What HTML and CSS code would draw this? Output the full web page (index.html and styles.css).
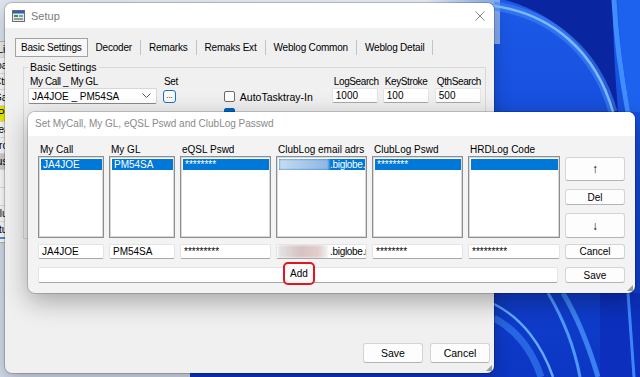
FILE: index.html
```html
<!DOCTYPE html>
<html lang="en">
<head>
  <meta charset="UTF-8">
  <meta name="viewport" content="width=device-width, initial-scale=1.0">
  <title>Setup</title>
  <link rel="stylesheet" href="styles.css">
</head>
<body>
  <div class="desktop">
    <!-- wallpaper -->
    <svg class="wallpaper" width="640" height="377" viewBox="0 0 640 377">
      <defs>
        <linearGradient id="sky" x1="0" y1="0" x2="1" y2="0">
          <stop offset="0" stop-color="#dfe6f1"/>
          <stop offset="0.85" stop-color="#e9eef6"/>
          <stop offset="1" stop-color="#7fa8ee"/>
        </linearGradient>
        <linearGradient id="deep" x1="0" y1="0" x2="0" y2="1">
          <stop offset="0" stop-color="#1c5ae8"/>
          <stop offset="1" stop-color="#0c36c4"/>
        </linearGradient>
      </defs>
      <rect x="0" y="0" width="640" height="377" fill="url(#deep)"/>
      <rect x="0" y="0" width="500" height="44" fill="url(#sky)"/>
      <rect x="0" y="238" width="190" height="139" fill="#d3dceb"/>
      <path d="M505 0 C560 15 598 55 613 112 L618 112 C615 70 612 30 614 0 Z" fill="#0a25a0"/>
      <path d="M494 6 C552 14 596 52 613 112" stroke="#3f86f6" stroke-width="9" fill="none" opacity="0.6"/>
      <path d="M494 6 C552 14 596 52 613 112" stroke="#7dbaff" stroke-width="2.5" fill="none"/>
      <path d="M614 0 C616 40 622 80 628 112" stroke="#3f8eff" stroke-width="5" fill="none"/>
      <path d="M618 0 L640 0 L640 112 L630 112 C625 80 619 40 618 0 Z" fill="#1d62ee"/>
      <rect x="600" y="293" width="40" height="84" fill="#0c30bd"/>
      <path d="M494 318 C516 330 532 350 541 377" stroke="#3b84f5" stroke-width="7" fill="none" opacity="0.6"/>
      <path d="M494 304 C522 318 542 345 553 377" stroke="#62a8ff" stroke-width="2.5" fill="none"/>
      <path d="M548 293 C564 320 575 350 580 377" stroke="#4f98ff" stroke-width="3" fill="none"/>
      <path d="M563 293 C579 320 590 350 598 377" stroke="#3a80f0" stroke-width="5" fill="none"/>
      <path d="M628 293 C630 320 632 350 634 377" stroke="#3b86ff" stroke-width="3" fill="none"/>
    </svg>

    <!-- window behind the setup dialog -->
    <div class="backwin">
      <div class="bw-row bw-gray">List</div>
      <div class="bw-row">Load</div>
      <div class="bw-row">Ctrl-</div>
      <div class="bw-row">Gap</div>
      <div class="bw-row bw-yellow">WPM</div>
      <div class="bw-row">Clear</div>
      <div class="bw-row">Search</div>
      <div class="bw-row bw-dark">Push</div>
      <div class="bw-row bw-blank"></div>
      <div class="bw-row bw-blank"></div>
      <div class="bw-row">Plug</div>
      <div class="bw-row bw-line">Setup</div>
    </div>

    <div class="setup">
      <div class="titlebar">
        <svg class="app-icon" width="13" height="12" viewBox="0 0 13 12">
          <rect x="0.5" y="0.5" width="12" height="11" fill="#e8e8e8" stroke="#6d6d6d"/>
          <rect x="1" y="1" width="11" height="2.5" fill="#2f5fb8"/>
          <rect x="2" y="5" width="4" height="2" fill="#3a9a3a"/>
          <rect x="7" y="5" width="4" height="2" fill="#3fb5e8"/>
          <rect x="2" y="8" width="9" height="2" fill="#9a9a9a"/>
        </svg>
        <span class="title-text">Setup</span>
        <svg class="close-x" width="10" height="10" viewBox="0 0 10 10">
          <path d="M0.5 0.5 L9.5 9.5 M9.5 0.5 L0.5 9.5" stroke="#8a8a8a" stroke-width="1"/>
        </svg>
      </div>

      <div class="setup-body">
        <div class="tabs">
          <div class="tab tab--active">Basic Settings</div>
          <div class="tab">Decoder</div>
          <div class="tab">Remarks</div>
          <div class="tab">Remaks Ext</div>
          <div class="tab">Weblog Common</div>
          <div class="tab">Weblog Detail</div>
        </div>

        <fieldset class="groupbox">
          <legend>Basic Settings</legend>
          <div class="gb-row">
            <div class="gb-col gb-col--call">
              <div class="gb-label">My Call _ My GL</div>
              <div class="combo">
                <span>JA4JOE _ PM54SA</span>
                <svg width="9" height="6" viewBox="0 0 9 6"><path d="M0.5 0.5 L4.5 4.5 L8.5 0.5" stroke="#555" fill="none"/></svg>
              </div>
            </div>
            <div class="gb-col gb-col--set">
              <div class="gb-label">Set</div>
              <div class="dots-btn">...</div>
            </div>
            <div class="gb-col gb-col--checks">
              <label class="check"><span class="check-box"></span>AutoTasktray-In</label>
              <label class="check"><span class="check-box check-box--on"></span></label>
            </div>
            <div class="gb-col gb-col--num">
              <div class="gb-label">LogSearch</div>
              <div class="field">1000</div>
            </div>
            <div class="gb-col gb-col--num gb-col--key">
              <div class="gb-label">KeyStroke</div>
              <div class="field">100</div>
            </div>
            <div class="gb-col gb-col--num gb-col--qth">
              <div class="gb-label">QthSearch</div>
              <div class="field">500</div>
            </div>
          </div>
        </fieldset>

        <div class="setup-footer">
          <div class="btn btn--footer">Save</div>
          <div class="btn btn--footer">Cancel</div>
        </div>
      </div>
      <div class="grip grip--setup"></div>
    </div>

    <div class="dialog">
      <div class="dialog-title">Set MyCall, My GL, eQSL Pswd and ClubLog Passwd</div>
      <div class="dialog-body">
        <div class="col-label">My Call</div>
        <div class="col-label">My GL</div>
        <div class="col-label">eQSL Pswd</div>
        <div class="col-label">ClubLog email adrs</div>
        <div class="col-label">ClubLog Pswd</div>
        <div class="col-label">HRDLog Code</div>
        <div></div>

        <div class="listbox"><div class="list-sel">JA4JOE</div></div>
        <div class="listbox"><div class="list-sel">PM54SA</div></div>
        <div class="listbox"><div class="list-sel">********</div></div>
        <div class="listbox"><div class="list-sel list-sel--mail"><span class="mail-hidden mail-hidden--sel"></span>.biglobe.ne</div></div>
        <div class="listbox"><div class="list-sel">********</div></div>
        <div class="listbox"><div class="list-sel"></div></div>
        <div class="side-btns">
          <div class="btn btn--tall">&#8593;</div>
          <div class="btn">Del</div>
          <div class="btn btn--tall btn--down">&#8595;</div>
        </div>

        <div class="field field--row">JA4JOE</div>
        <div class="field field--row">PM54SA</div>
        <div class="field field--row">*********</div>
        <div class="field field--row field--mail"><span class="mail-hidden"></span>.biglobe.ne</div>
        <div class="field field--row">********</div>
        <div class="field field--row">*********</div>
        <div class="btn btn--row">Cancel</div>

        <div class="wide-row">
          <div class="field field--wide"></div>
          <div class="add-btn">Add</div>
        </div>
        <div class="btn btn--row btn--save">Save</div>
      </div>
      <div class="grip grip--dialog"></div>
    </div>
  </div>
</body>
</html>
```

FILE: styles.css
```css
/* Desktop */
body {
  margin: 0;
  font-family: "Liberation Sans", Arial, sans-serif;
  font-size: 10px;
  color: #000;
}

.desktop {
  position: relative;
  width: 640px;
  height: 377px;
  overflow: hidden;
}

.wallpaper {
  position: absolute;
  left: 0;
  top: 0;
}

/* Log window peeking out on the left */
.backwin {
  position: absolute;
  left: -54px;
  top: 41px;
  width: 66px;
  height: 200px;
  background: #fff;
  border: 1px solid #b8b8b8;
}

.bw-row {
  height: 15px;
  line-height: 15px;
  text-align: right;
  font-size: 10px;
  border-bottom: 1px solid #e2e2e2;
}

.bw-gray { background: #eeeeee; }
.bw-yellow { background: #f4f400; }
.bw-dark { background: #d4d4d4; }
.bw-blank { height: 17px; }
.bw-line { border-bottom: 2px solid #5b8fd6; }

/* Setup window */
.setup {
  position: absolute;
  left: 5px;
  top: 3px;
  width: 489px;
  height: 370px;
  background: #f0f0f0;
  border-radius: 7px;
  box-shadow: 0 0 0 1px rgba(0,0,0,.18), 0 6px 18px rgba(0,0,0,.25);
  display: flex;
  flex-direction: column;
  overflow: hidden;
}

.titlebar {
  height: 25px;
  flex: 0 0 25px;
  background: #fff;
  display: flex;
  align-items: center;
  padding: 0 7px;
}

.title-text {
  margin-left: 6px;
  color: #7a7a7a;
  font-size: 11px;
}

.close-x {
  margin-left: auto;
  margin-right: 2px;
}

.setup-body {
  flex: 1;
  display: flex;
  flex-direction: column;
  padding: 10px 4px 10px 10px;
}

.tabs {
  display: flex;
  align-items: center;
  height: 18px;
}

.tab {
  height: 15px;
  line-height: 15px;
  padding: 0 8px;
  border-right: 1px solid #c4c4c4;
  letter-spacing: -0.2px;
}

.tab--active {
  height: 17px;
  line-height: 17px;
  padding: 0 5px;
  border: 1px solid #a2a2a2;
  background: #f7f7f7;
}

.groupbox {
  margin: 5px 0 0 8px;
  width: 462px;
  height: 178px;
  box-sizing: border-box;
  border: 1px solid #d8d8d8;
  padding: 0 4px;
}

.groupbox legend {
  padding: 0 2px;
  font-size: 10.5px;
  line-height: 12px;
}

.gb-row {
  display: flex;
  margin-top: 3px;
}

.gb-label {
  height: 12px;
  line-height: 12px;
  padding-left: 2px;
  white-space: nowrap;
  letter-spacing: -0.4px;
}

.gb-col--call { width: 129px; }

.combo {
  height: 16px;
  box-sizing: border-box;
  background: #fff;
  border: 1px solid #d6d6d6;
  border-bottom-color: #8a8a8a;
  border-radius: 2px;
  display: flex;
  align-items: center;
  justify-content: space-between;
  padding: 0 5px 0 3px;
}

.gb-col--set {
  margin-left: 5px;
}

.dots-btn {
  margin: 2px 0 0 1px;
  width: 13px;
  height: 13px;
  box-sizing: border-box;
  border: 1px solid #1a6fc9;
  border-radius: 3px;
  background: #fbfbfb;
  font-size: 8px;
  line-height: 9px;
  text-align: center;
}

.gb-col--checks {
  margin-left: 46px;
  width: 108px;
  padding-top: 12px;
}

.check {
  display: flex;
  align-items: center;
  height: 17px;
  font-size: 10.5px;
}

.check-box {
  width: 9px;
  height: 9px;
  border: 1px solid #6a6a6a;
  border-radius: 2px;
  background: #fff;
  margin-right: 5px;
}

.check-box--on {
  background: #0067c0;
  border-color: #0067c0;
}

.gb-col--num { width: 46px; }
.gb-col--key { margin-left: 5px; }
.gb-col--qth { margin-left: 6px; }

.field {
  height: 15px;
  box-sizing: border-box;
  background: #fff;
  border: 1px solid #e4e4e4;
  border-bottom-color: #a8a8a8;
  border-radius: 2px;
  line-height: 13px;
  padding-left: 3px;
  white-space: nowrap;
  overflow: hidden;
}

.setup-footer {
  margin-top: auto;
  display: flex;
  justify-content: flex-end;
  gap: 7px;
}

/* Buttons */
.btn {
  box-sizing: border-box;
  height: 16px;
  background: #fdfdfd;
  border: 1px solid #d4d4d4;
  border-bottom-color: #b4b4b4;
  border-radius: 3px;
  display: flex;
  align-items: center;
  justify-content: center;
}

.btn--footer {
  width: 60px;
  height: 20px;
  font-size: 10.5px;
}

.grip {
  position: absolute;
  width: 6px;
  height: 6px;
  background-image: radial-gradient(circle, #9a9a9a 0.8px, transparent 1px);
  background-size: 2px 2px;
  clip-path: polygon(100% 0, 100% 100%, 0 100%);
}

.grip--setup { right: 2px; bottom: 2px; }
.grip--dialog { right: 2px; bottom: 2px; }

/* MyCall dialog */
.dialog {
  position: absolute;
  left: 28px;
  top: 112px;
  width: 607px;
  height: 181px;
  background: #f3f3f3;
  border-radius: 7px;
  box-shadow: 0 0 0 1px rgba(0,0,0,.16), 0 8px 26px rgba(0,0,0,.32);
  overflow: hidden;
}

.dialog-title {
  height: 24px;
  line-height: 24px;
  background: #fff;
  padding-left: 7px;
  color: #8a8a8a;
}

.dialog-body {
  display: grid;
  grid-template-columns: 66px 66px 91px 91px 91px 92px 60px;
  grid-template-rows: 13px 82px 21px 24px;
  column-gap: 5px;
  padding: 7px 0 0 10px;
}

.col-label {
  line-height: 13px;
  padding-left: 2px;
}

.listbox {
  background: #fff;
  border: 1px solid #8e8e8e;
  box-shadow: inset 0 0 0 1px #d8d8d8;
  padding: 2px 1px 0 2px;
}

.list-sel {
  height: 11px;
  line-height: 11px;
  background: #0078d7;
  color: #fff;
  padding-left: 2px;
  white-space: nowrap;
  overflow: hidden;
}

.list-sel--mail {
  padding-left: 0;
  display: flex;
  letter-spacing: -0.3px;
}

.mail-hidden {
  display: inline-block;
  width: 50px;
  height: 100%;
  background: linear-gradient(90deg, #e4e4e4 0%, #d7c3c3 45%, #e2cccc 80%, #f2f2f2 100%);
  filter: blur(1px);
  margin-right: 2px;
  flex: none;
}

.mail-hidden--sel {
  background: linear-gradient(90deg, #c8dcf0 0%, #a9c8ea 50%, #8cb6e6 100%);
  margin-right: 1px;
}

.side-btns {
  display: flex;
  flex-direction: column;
  gap: 8px;
  padding-top: 1px;
}

.btn--tall {
  height: 24px;
  font-size: 12px;
}

.btn--down { height: 25px; }

.field--row {
  align-self: end;
}

.field--mail {
  display: flex;
  padding-left: 1px;
  letter-spacing: -0.3px;
}

.btn--row {
  align-self: end;
  height: 15px;
}

.btn--save { height: 16px; }

.wide-row {
  grid-column: 1 / 7;
  align-self: end;
  position: relative;
  height: 16px;
}

.field--wide {
  height: 16px;
  margin-right: 2px;
}

/* red marker round the Add button */
.add-btn {
  position: absolute;
  left: 245px;
  top: -5px;
  width: 32px;
  height: 23px;
  box-sizing: border-box;
  border: 2.5px solid #e4141e;
  border-radius: 5px;
  background: #fafafa;
  display: flex;
  align-items: center;
  justify-content: center;
}
```
